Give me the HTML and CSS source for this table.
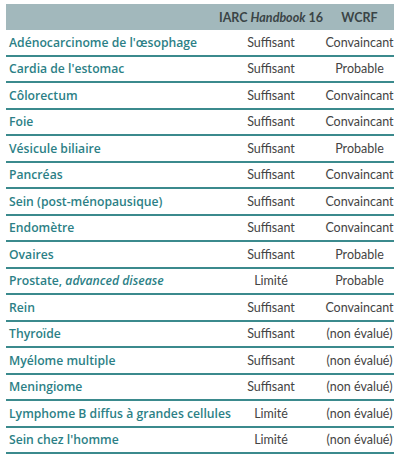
FILE: index.html
```html
<!DOCTYPE html>
<html lang="fr">
<head>
<meta charset="utf-8">
<link rel="stylesheet" href="styles.css">
</head>
<body>
<div class="table">
  <div class="row head">
    <div class="c1"></div>
    <div class="c2">IARC <em>Handbook</em> 16</div>
    <div class="c3">WCRF</div>
  </div>
  <div class="row"><div class="c1">Adénocarcinome de l'œsophage</div><div class="c2">Suffisant</div><div class="c3">Convaincant</div></div>
  <div class="row"><div class="c1">Cardia de l'estomac</div><div class="c2">Suffisant</div><div class="c3">Probable</div></div>
  <div class="row"><div class="c1">Côlorectum</div><div class="c2">Suffisant</div><div class="c3">Convaincant</div></div>
  <div class="row"><div class="c1">Foie</div><div class="c2">Suffisant</div><div class="c3">Convaincant</div></div>
  <div class="row"><div class="c1">Vésicule biliaire</div><div class="c2">Suffisant</div><div class="c3">Probable</div></div>
  <div class="row"><div class="c1">Pancréas</div><div class="c2">Suffisant</div><div class="c3">Convaincant</div></div>
  <div class="row"><div class="c1">Sein (post-ménopausique)</div><div class="c2">Suffisant</div><div class="c3">Convaincant</div></div>
  <div class="row"><div class="c1">Endomètre</div><div class="c2">Suffisant</div><div class="c3">Convaincant</div></div>
  <div class="row"><div class="c1">Ovaires</div><div class="c2">Suffisant</div><div class="c3">Probable</div></div>
  <div class="row"><div class="c1">Prostate, <em>advanced disease</em></div><div class="c2">Limité</div><div class="c3">Probable</div></div>
  <div class="row"><div class="c1">Rein</div><div class="c2">Suffisant</div><div class="c3">Convaincant</div></div>
  <div class="row"><div class="c1">Thyroïde</div><div class="c2">Suffisant</div><div class="c3">(non évalué)</div></div>
  <div class="row"><div class="c1">Myélome multiple</div><div class="c2">Suffisant</div><div class="c3">(non évalué)</div></div>
  <div class="row"><div class="c1">Meningiome</div><div class="c2">Suffisant</div><div class="c3">(non évalué)</div></div>
  <div class="row"><div class="c1">Lymphome B diffus à grandes cellules</div><div class="c2">Limité</div><div class="c3">(non évalué)</div></div>
  <div class="row"><div class="c1">Sein chez l'homme</div><div class="c2">Limité</div><div class="c3">(non évalué)</div></div>
</div>
</body>
</html>
```
FILE: styles.css
```css
html, body {
  margin: 0;
  padding: 0;
  background: #ffffff;
}
body {
  font-family: "Lato", "Open Sans", sans-serif;
  font-size: 12.5px;
  color: #444444;
}
.table {
  margin: 4px 0 0 6px;
  width: 388px;
  display: flex;
  flex-direction: column;
}
.row {
  display: grid;
  grid-template-columns: 211px 108px 69px;
  align-items: center;
  height: 24.5px;
  border-bottom: 2px solid #3b8a8d;
}
.row.head {
  height: 26px;
  border-bottom: none;
  background: #a2b8bc;
  font-weight: 700;
  color: #3a4446;
}
.row.head em {
  font-weight: 700;
}
.c1 {
  padding-left: 3px;
  font-family: "Open Sans", "Lato", sans-serif;
  font-size: 12.2px;
  font-weight: 600;
  color: #2c7f86;
  white-space: nowrap;
}
.c2, .c3 {
  text-align: center;
  white-space: nowrap;
}
```
